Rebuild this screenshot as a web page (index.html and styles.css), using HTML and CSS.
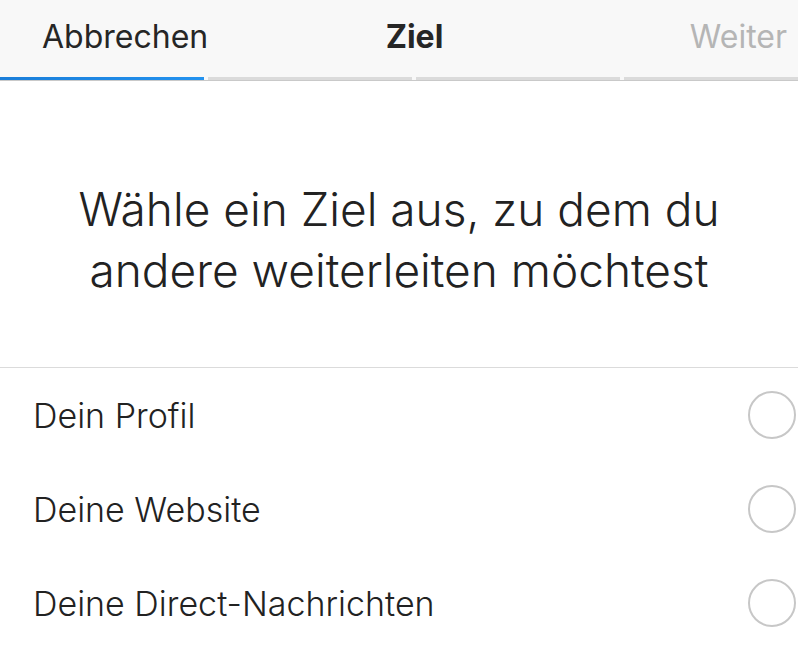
FILE: index.html
```html
<!DOCTYPE html>
<html lang="de">
<head>
<meta charset="utf-8">
<title>Ziel</title>
<link rel="stylesheet" href="styles.css">
</head>
<body>
<div class="screen">
  <header class="topbar">
    <span class="nav-btn cancel">Abbrechen</span>
    <span class="nav-title">Ziel</span>
    <span class="nav-btn next">Weiter</span>
  </header>
  <div class="progress">
    <div class="seg active"></div>
    <div class="seg"></div>
    <div class="seg"></div>
    <div class="seg"></div>
  </div>
  <section class="intro">
    <h1 class="headline">Wähle ein Ziel aus, zu dem du<br>andere weiterleiten möchtest</h1>
  </section>
  <ul class="options">
    <li class="option"><span class="label">Dein Profil</span><span class="radio"></span></li>
    <li class="option"><span class="label">Deine Website</span><span class="radio"></span></li>
    <li class="option"><span class="label">Deine Direct-Nachrichten</span><span class="radio"></span></li>
  </ul>
</div>
</body>
</html>
```
FILE: styles.css
```css
* { box-sizing: border-box; }
html, body { margin: 0; padding: 0; background: #fff; }
body {
  font-family: Inter, "Noto Sans", "Liberation Sans", sans-serif;
  color: #262626;
  overflow: hidden;
}
.screen { width: 798px; }
.topbar {
  height: 77px;
  background: #f8f8f8;
  display: grid;
  grid-template-columns: 1fr auto 1fr;
  align-items: center;
  padding: 0 11px 4px 42px;
}
.nav-btn { font-size: 32px; font-weight: 400; }
.cancel { justify-self: start; color: #262626; }
.next { justify-self: end; color: #b5b5b5; }
.nav-title { font-size: 32px; font-weight: 700; color: #262626; }
.progress {
  display: flex;
  gap: 4px;
  height: 4px;
  overflow: hidden;
  background: #f8f8f8;
  border-bottom: 1px solid #c9c9c9;
}
.seg { flex: 0 0 204px; height: 3px; background: #dbdbdb; }
.seg.active { background: linear-gradient(90deg, #1a7ed9, #2392ef); }
.intro {
  height: 287px;
  display: flex;
  align-items: center;
  justify-content: center;
  border-bottom: 1px solid #dbdbdb;
}
.headline {
  margin: 0;
  font-size: 46px;
  font-weight: 300;
  line-height: 61px;
  text-align: center;
  padding-top: 32px;
  color: #222;
}
.options { list-style: none; margin: 0; padding: 0; }
.option {
  height: 94px;
  display: flex;
  align-items: center;
  justify-content: space-between;
  padding: 0 2px 0 33px;
}
.label { font-size: 34px; font-weight: 300; color: #222; }
.radio {
  width: 48px;
  height: 48px;
  border: 2px solid #c7c7c7;
  border-radius: 50%;
}
```
